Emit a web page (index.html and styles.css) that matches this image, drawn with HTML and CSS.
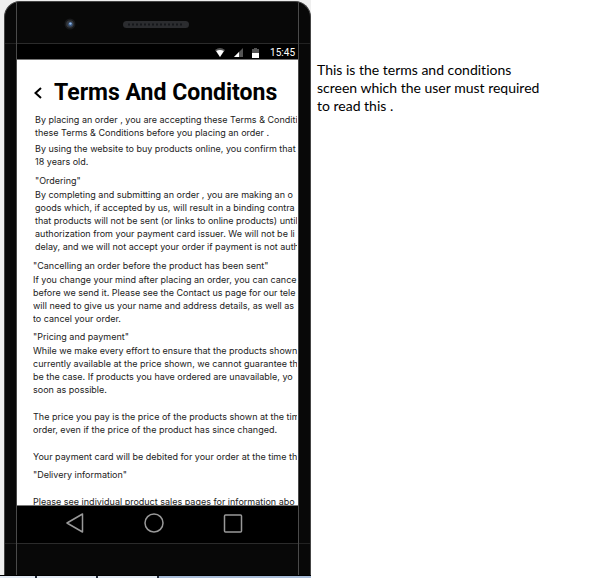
FILE: index.html
```html
<!DOCTYPE html>
<html lang="en">
<head>
<meta charset="utf-8">
<title>Terms And Conditons</title>
<link rel="stylesheet" href="styles.css">
</head>
<body>
<div class="page">
  <div class="stage">
    <div class="phone">
      <div class="rail rail-left"><span class="cap"></span><span class="side"></span><span class="foot"></span></div>
      <div class="body">
        <div class="bezel-top">
          <svg class="camera" width="12" height="12" viewBox="0 0 12 12" aria-hidden="true">
            <circle cx="6" cy="6" r="5.5" fill="#18191b"/><circle cx="6" cy="6" r="3.8" fill="#34383e"/><circle cx="6.4" cy="6.2" r="2.2" fill="#39577f"/><circle cx="6.4" cy="5.6" r="1.2" fill="#8fb5e6"/>
          </svg>
          <svg class="speaker" width="66" height="7" viewBox="0 0 66 7" aria-hidden="true">
            <rect x="0" y="0" width="66" height="7" rx="3.5" fill="#2b2c2f"/><path d="M5 3.5H61" stroke="#15161a" stroke-width="2" stroke-dasharray="2 2"/>
          </svg>
        </div>
        <div class="status">
          <svg width="10" height="9" viewBox="0 0 10 9" aria-hidden="true"><path d="M0 2Q5-2 10 2L5 9Z" fill="#555"/><path d="M1.2 3Q5 1 8.8 3L5 9Z" fill="#fff"/></svg>
          <svg width="9" height="9" viewBox="0 0 9 9" aria-hidden="true"><path d="M9 0V9H0Z" fill="#555"/><path d="M5 4V9H0Z" fill="#fff"/></svg>
          <svg width="7" height="10" viewBox="0 0 7 10" aria-hidden="true"><path d="M2 0H5V1H7V5H0V1H2Z" fill="#555"/><path d="M0 5H7V10H0Z" fill="#fff"/></svg>
          <span class="clock">15:45</span>
        </div>
        <main class="screen">
          <header class="title-bar">
            <button class="back" aria-label="Back"><svg width="8" height="12" viewBox="0 0 8 12"><path d="M7 1L1.5 6L7 11" fill="none" stroke="#000" stroke-width="2"/></svg></button>
            <h1>Terms And Conditons</h1>
          </header>
          <div class="terms">
            <p class="intro">By placing an order , you are accepting these Terms &amp; Conditi<br>these Terms &amp; Conditions before you placing an order .</p>
            <p class="intro">By using the website to buy products online, you confirm that<br>18 years old.</p>
            <section class="intro ordering">
              <h2>"Ordering"</h2>
              <p>By completing and submitting an order , you are making an o<br>goods which, if accepted by us, will result in a binding contra<br>that products will not be sent (or links to online products) until<br>authorization from your payment card issuer. We will not be li<br>delay, and we will not accept your order if payment is not auth</p>
            </section>
            <section>
              <h2>"Cancelling an order before the product has been sent"</h2>
              <p>If you change your mind after placing an order, you can cance<br>before we send it. Please see the Contact us page for our tele<br>will need to give us your name and address details, as well as<br>to cancel your order.</p>
            </section>
            <section>
              <h2>"Pricing and payment"</h2>
              <p>While we make every effort to ensure that the products shown<br>currently available at the price shown, we cannot guarantee th<br>be the case. If products you have ordered are unavailable, yo<br>soon as possible.</p>
              <p class="spaced">The price you pay is the price of the products shown at the tim<br>order, even if the price of the product has since changed.</p>
              <p class="spaced">Your payment card will be debited for your order at the time th</p>
            </section>
            <section>
              <h2>"Delivery information"</h2>
              <p class="spaced">Please see individual product sales pages for information abo</p>
            </section>
          </div>
        </main>
        <nav class="nav">
          <button aria-label="Back"><svg width="20" height="20" viewBox="0 0 20 20"><path d="M17.5 1V19L2 10Z"/></svg></button>
          <button aria-label="Home"><svg width="20" height="20" viewBox="0 0 20 20"><circle cx="10" cy="10" r="9"/></svg></button>
          <button aria-label="Recent apps"><svg width="20" height="20" viewBox="0 0 20 20"><rect x="1.5" y="2" width="17" height="17" rx="1"/></svg></button>
        </nav>
        <div class="bezel-bottom"></div>
      </div>
      <div class="rail rail-right"><span class="cap"></span><span class="side"></span><span class="foot"></span></div>
    </div>
    <div class="tabs"><span></span><span></span><span></span><span class="rest"></span></div>
  </div>
  <aside class="note">This is the terms and conditions screen which the user must required to read this .</aside>
</div>
</body>
</html>
```
FILE: styles.css
```css
* { box-sizing: border-box; }
body { margin: 0; background: #fff; font-family: Roboto, "Liberation Sans", sans-serif; }
.page { display: flex; min-height: 100vh; }
.stage { flex: 0 0 311px; display: flex; flex-direction: column; background: #efefef; }
.phone {
  flex: 1;
  display: grid;
  grid-template-columns: 12px 1fr 12px;
  margin: 1px 0 0 4px;
  background: #080808;
  border: 1px solid #454545;
  border-bottom: 0;
  border-radius: 16px 16px 0 0;
  overflow: hidden;
}
.rail { display: grid; grid-template-rows: 41px 1fr 32px; }
.rail span { border-top: 1px solid #222; }
.rail .cap { border-top: 0; }
.rail-left { border-right: 1px solid #4a4a4a; }
.rail-right { border-left: 1px solid #4a4a4a; }
.body { display: grid; grid-template-rows: 41px 17px 1fr 38px 32px; min-width: 0; }
.bezel-top {
  display: grid;
  grid-template-columns: 47px 59px 1fr;
  padding-top: 16px;
}
.camera { grid-column: 2; }
.speaker { margin-top: 3px; }
.status {
  display: flex;
  align-items: center;
  justify-content: flex-end;
  gap: 9px;
  padding: 2px 3px 0 0;
  background: #000;
  border-top: 1px solid #2b2b2b;
  border-bottom: 1px solid #777;
}
.clock { padding-left: 2px; color: #fff; font-size: 10px; line-height: 14px; }
.screen { background: #fff; overflow: hidden; padding: 19px 1px 0 16px; contain: size; }
.title-bar { display: flex; align-items: center; gap: 12px; height: 28px; }
h1 { margin: 0; font-size: 23px; line-height: 28px; font-weight: 700; white-space: nowrap; }
button { display: flex; margin: 0; padding: 0; border: 0; background: none; }
.title-bar .back { padding-left: 1px; }
.terms { overflow: hidden; margin-top: 6px; font-family: Inter, Arial, sans-serif; font-size: 9px; line-height: 13px; color: #222; white-space: nowrap; }
.terms p, .terms h2 { margin: 0; font-size: 9px; font-weight: 400; }
.terms > .intro { padding-left: 2px; margin-bottom: 3px; }
.terms .ordering { padding-top: 3px; }
.terms section { margin-bottom: 5px; }
.terms > .ordering { margin-bottom: 6px; }
.terms section h2 { margin-bottom: 1px; }
.terms .spaced { margin-top: 14px; }
.nav { display: flex; align-items: center; justify-content: space-between; padding: 0 55px 3px 48px; background: #000; border-top: 1px solid #777; }
.nav svg { fill: none; stroke: #999; stroke-width: 1.5; stroke-linejoin: round; }
.bezel-bottom { border-top: 1px solid #2b2b2b; }
.tabs { display: flex; gap: 2px; height: 3px; background: #222b3a; border-top: 1px solid #000; }
.tabs span { flex: 0 0 59px; background: #e3eaf4; }
.tabs span:first-child { flex-basis: 35px; }
.tabs .rest { flex: 1; background: #a9bdd9; }
.note {
  flex: 1;
  padding: 61px 48px 0 6px;
  font-family: Lato, "Open Sans", sans-serif;
  font-size: 14px;
  line-height: 18px;
  font-variant-ligatures: none;
  color: #000;
}
```
